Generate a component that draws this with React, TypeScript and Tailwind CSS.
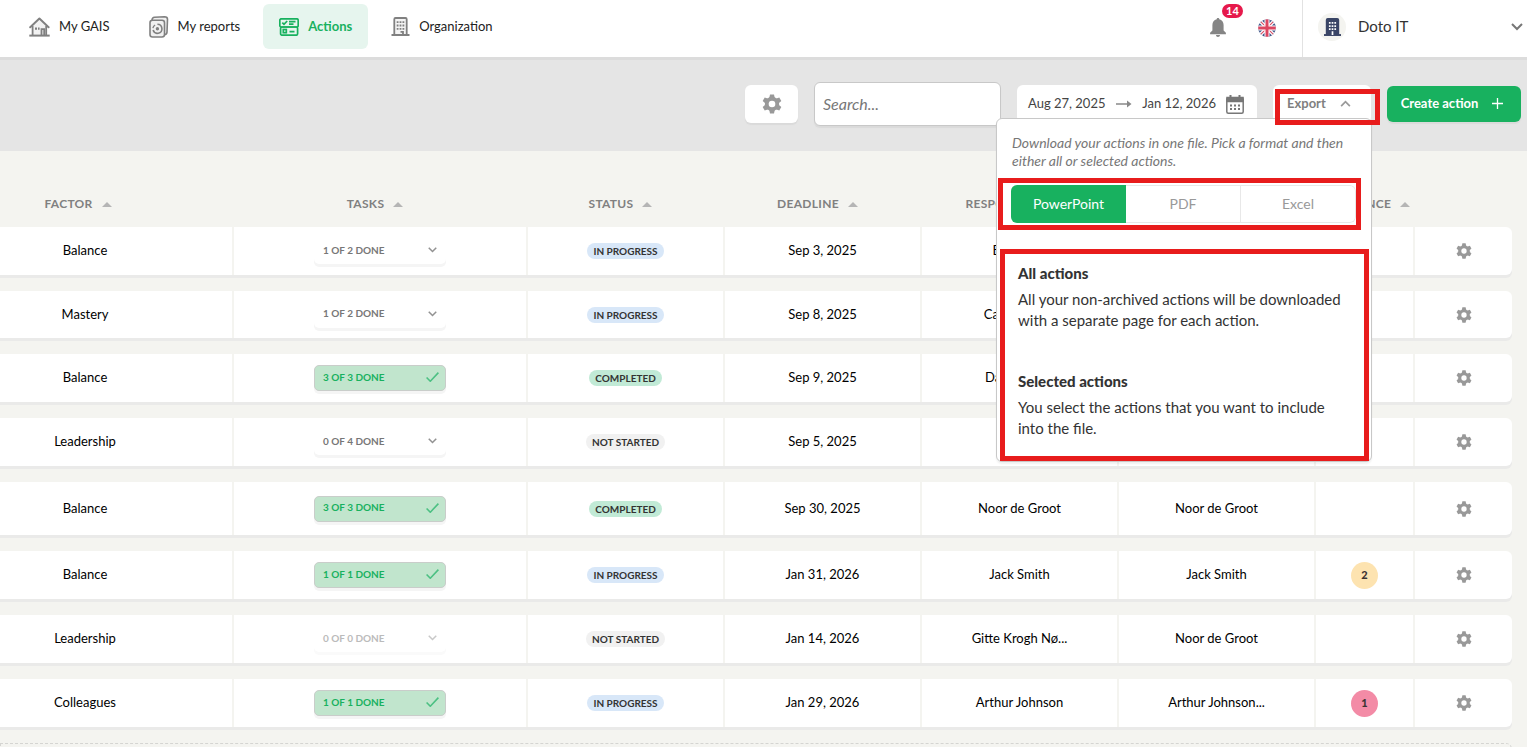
import React from 'react';

interface ActionRow {
  factor: string;
  tasks: string;
  taskState: 'open' | 'done' | 'empty';
  status: 'IN PROGRESS' | 'COMPLETED' | 'NOT STARTED';
  deadline: string;
  responsible: string;
  owner: string;
  relevance?: number;
  height: string;
}

const ROWS: ActionRow[] = [
  { factor: 'Balance', tasks: '1 OF 2 DONE', taskState: 'open', status: 'IN PROGRESS', deadline: 'Sep 3, 2025', responsible: 'Ella Holm', owner: '', height: 'h-12' },
  { factor: 'Mastery', tasks: '1 OF 2 DONE', taskState: 'open', status: 'IN PROGRESS', deadline: 'Sep 8, 2025', responsible: 'Carla Jensen', owner: '', height: 'h-[47px]' },
  { factor: 'Balance', tasks: '3 OF 3 DONE', taskState: 'done', status: 'COMPLETED', deadline: 'Sep 9, 2025', responsible: 'David Smith', owner: '', height: 'h-12' },
  { factor: 'Leadership', tasks: '0 OF 4 DONE', taskState: 'open', status: 'NOT STARTED', deadline: 'Sep 5, 2025', responsible: '', owner: '', height: 'h-12' },
  { factor: 'Balance', tasks: '3 OF 3 DONE', taskState: 'done', status: 'COMPLETED', deadline: 'Sep 30, 2025', responsible: 'Noor de Groot', owner: 'Noor de Groot', height: 'h-[53px]' },
  { factor: 'Balance', tasks: '1 OF 1 DONE', taskState: 'done', status: 'IN PROGRESS', deadline: 'Jan 31, 2026', responsible: 'Jack Smith', owner: 'Jack Smith', relevance: 2, height: 'h-12' },
  { factor: 'Leadership', tasks: '0 OF 0 DONE', taskState: 'empty', status: 'NOT STARTED', deadline: 'Jan 14, 2026', responsible: 'Gitte Krogh Nø...', owner: 'Noor de Groot', height: 'h-12' },
  { factor: 'Colleagues', tasks: '1 OF 1 DONE', taskState: 'done', status: 'IN PROGRESS', deadline: 'Jan 29, 2026', responsible: 'Arthur Johnson', owner: 'Arthur Johnson...', relevance: 1, height: 'h-12' },
];

const STATUS_STYLES = {
  'IN PROGRESS': 'bg-[#d8e7f8]',
  COMPLETED: 'bg-[#c1ead6]',
  'NOT STARTED': 'bg-[#f1f1f1]',
};

const TASK_STYLES = {
  open: 'border-transparent bg-white text-[#777] shadow-[0_3px_0_#f5f5f5]',
  done: 'border-[#c9cdca] bg-[#c1e5cd] text-[#18b15f] shadow-[0_3px_0_#f5f5f5]',
  empty: 'border-transparent bg-white text-[#bbb] shadow-[0_3px_0_#fafafa]',
};

const GearIcon: React.FC<{ className: string }> = ({ className }) => (
  <svg viewBox="-12 -12 24 24" className={className} fill="currentColor" aria-hidden="true">
    {[0, 60, 120].map(a => (
      <path key={a} transform={`rotate(${a})`} d="M-2.4-11.5h4.8l1 4.5v14l-1 4.5h-4.8l-1-4.5v-14z" />
    ))}
    <circle r="8.6" />
    <circle r="4" fill="#fff" />
  </svg>
);

const Chevron: React.FC<{ className: string; up?: boolean }> = ({ className, up }) => (
  <svg viewBox="0 0 12 8" className={className} fill="none" stroke="currentColor" strokeWidth="2" aria-hidden="true">
    <path d={up ? 'M1 7l5-5 5 5' : 'M1 1l5 5 5-5'} />
  </svg>
);

const HomeIcon = () => (
  <svg viewBox="0 0 21 20" className="h-5 w-[21px] text-[#808080]" fill="none" stroke="currentColor" strokeWidth="1.8" aria-hidden="true">
    <path d="M3.600 9.500L10.400 3l6.800 6.500v9H3.600z" fill="#f2f2f2" stroke="none" />
    <path d="M3.600 9v9.300M17.200 9v9.300" />
    <path d="M.3 18.600h20.400" strokeWidth="2" />
    <path d="M1.200 10.200l9.200-8.600 9.200 8.600" strokeLinejoin="round" strokeLinecap="round" strokeWidth="2" />
    <path d="M12.500 18.500v-6.300h2.700v6.300" />
    <path d="M6 11.600h2M9 11.600h1.600" strokeWidth="2.200" />
  </svg>
);

const ReportsIcon = () => (
  <svg viewBox="0 0 20 22" className="h-[22px] w-5 text-[#808080]" fill="none" stroke="currentColor" strokeWidth="1.600" aria-hidden="true">
    <path d="M3 4C3.200 2 4 1.300 5.500 1.200l10-.4c2 0 3 .8 3 2.500L18 16c0 1.600-.8 2.400-2 2.600" fill="#f0f0f0" />
    <rect x="1" y="4.200" width="14.500" height="16.800" rx="2.500" fill="#f0f0f0" />
    <path d="M8.400 8.300a4.500 4.500 0 1 1-4.300 5.800" />
    <path d="M3.900 12.200a4.500 4.500 0 0 1 2.200-3.200" strokeWidth="1.300" />
    <circle cx="8.400" cy="12.800" r=".9" fill="currentColor" />
  </svg>
);

const ActionsIcon = () => (
  <svg viewBox="0 0 20 18" className="h-[18px] w-5 text-[#18b15f]" fill="none" stroke="currentColor" strokeWidth="1.700" aria-hidden="true">
    <rect x=".8" y=".8" width="18.400" height="8.200" rx="1.500" />
    <rect x="1.600" y="9" width="17" height="8.200" rx="1.500" />
    <path d="M3.300 4.700l1.700 1.700 3.200-3.400M10 3.600h6.500M10 6.200h4.500M10.500 13.600h5" />
    <rect x="4.300" y="11.500" width="3" height="3.200" />
  </svg>
);

const BuildingIcon: React.FC<{ className: string; solid?: boolean }> = ({ className, solid }) => (
  <svg viewBox="0 0 18 19" className={className} fill="none" stroke="currentColor" strokeWidth="1.800" aria-hidden="true">
    <path d="M2.800 18V2.200c0-.8.4-1.200 1.200-1.200h10c.8 0 1.200.4 1.200 1.200V18" fill={solid ? 'currentColor' : '#f4f4f4'} />
    <path d="M0 18h18" strokeWidth="2" />
    <g stroke={solid ? '#fff' : 'currentColor'} strokeWidth="1.800">
      <path d="M5.200 5.200H7M8.100 5.200h1.800M11 5.200h1.800M5.200 8.500H7M8.100 8.500h1.800M11 8.500h1.800M5.200 11.800H7M8.100 11.800h1.800M11 11.800h1.800" />
      <path d={solid ? 'M9 14v4' : 'M9 14.800h2.500V18'} />
    </g>
  </svg>
);

const BellIcon = () => (
  <svg viewBox="0 0 16 19" className="h-[19px] w-4 text-[#858585]" fill="currentColor" aria-hidden="true">
    <path d="M8 0c.8 0 1.300.5 1.300 1.300 2.700.7 4.300 2.900 4.300 5.700v5.400l2.300 2.400v1.400H.1v-1.400l2.300-2.400V7c0-2.800 1.600-5 4.300-5.700C6.700.5 7.200 0 8 0zM6 17h4c0 1.200-.8 1.900-2 1.900S6 18.200 6 17z" />
  </svg>
);

const FlagIcon = () => (
  <svg viewBox="0 0 18 18" className="size-[18px]" aria-hidden="true">
    <clipPath id="flag-round"><circle cx="9" cy="9" r="8.800" /></clipPath>
    <g clipPath="url(#flag-round)">
      <path fill="#3d5588" d="M0 0h18v18H0z" />
      <path d="M0 0l18 18M18 0L0 18" stroke="#fff" strokeWidth="3.400" />
      <path d="M0 0l18 18M18 0L0 18" stroke="#d94b63" strokeWidth="1.100" />
      <path d="M9 0v18M0 9h18" stroke="#fff" strokeWidth="5" />
      <path d="M9 0v18M0 9h18" stroke="#dc4560" strokeWidth="3" />
    </g>
  </svg>
);

const CalendarIcon = () => (
  <svg viewBox="0 0 18 19" className="h-[19px] w-[18px] text-[#777]" fill="none" stroke="currentColor" strokeWidth="1.500" aria-hidden="true">
    <rect x=".8" y="2.800" width="16.400" height="15.400" rx="1.500" />
    <path d="M1 2.500h16v4H1z" fill="currentColor" />
    <path d="M4.500 0v3M13.500 0v3" strokeWidth="2" />
    <path d="M4 10.500h2M8 10.500h2M12 10.500h2M4 14h2M8 14h2M12 14h2" strokeWidth="1.800" />
  </svg>
);

const NavItem: React.FC<{ label: string; icon: React.ReactNode; active?: boolean }> = ({ label, icon, active }) => (
  <a
    href="#"
    className={`flex h-[45px] items-center gap-[9px] rounded-md px-4 text-[13px] ${active ? 'bg-[#e6f5ee] font-bold text-[#18b15f]' : 'text-[#222]'}`}
  >
    {icon}
    <span>{label}</span>
  </a>
);

const Header = () => (
  <header className="relative z-10 flex h-[57px] justify-between bg-white shadow-[0_3px_0_#dcdcdc]">
    <nav className="flex gap-[7px] pt-1 pl-[13px]">
      <NavItem label="My GAIS" icon={<HomeIcon />} />
      <NavItem label="My reports" icon={<ReportsIcon />} />
      <NavItem label="Actions" icon={<ActionsIcon />} active />
      <NavItem label="Organization" icon={<BuildingIcon className="h-[19px] w-[19px] text-[#808080]" />} />
    </nav>
    <div className="flex">
      <div className="flex items-center gap-8 pr-[26px] pb-[2px]">
        <button type="button" aria-label="Notifications" className="relative">
          <BellIcon />
          <span className="absolute -top-[14px] left-3 rounded-full bg-[#e6194b] px-1 text-[11px] leading-[14px] font-bold text-white">14</span>
        </button>
        <button type="button" aria-label="Language">
          <FlagIcon />
        </button>
      </div>
      <button type="button" className="flex w-[225px] items-center border-l border-[#e2e2e2] pb-1 pl-[15px] text-[15px] text-[#333]">
        <span className="flex size-7 items-center justify-center rounded-full bg-[#f4f4f0]">
          <BuildingIcon className="h-[18px] w-[17px] text-[#3a4566]" solid />
        </span>
        <span className="ml-3">Doto IT</span>
        <Chevron className="mr-1 ml-auto h-2 w-3 text-[#777]" />
      </button>
    </div>
  </header>
);

const ExportMenu = () => (
  <div className="absolute top-[33px] -right-px z-20 w-[376px] rounded-md border border-[#c8c8c8] bg-white shadow-[0_2px_2px_rgba(0,0,0,0.06)]">
    <p className="px-[15px] pt-[15px] text-sm leading-[18px] text-[#777] italic">
      Download your actions in one file. Pick a format and then either all or selected actions.
    </p>
    <div className="mt-2 mr-[10px] ml-px border-[5px] border-[#e81c1c] py-[2px] pl-2">
      <div className="grid h-[38px] grid-cols-3 overflow-hidden rounded-md text-sm text-[#999]">
        <button type="button" className="bg-[#18b15f] text-white">PowerPoint</button>
        <button type="button" className="border-y border-r border-[#e8e8e8]">PDF</button>
        <button type="button" className="rounded-r-md border-y border-r border-[#e8e8e8]">Excel</button>
      </div>
    </div>
    <div className="mt-[19px] mr-[2px] ml-[3px] flex flex-col gap-10 border-[5px] border-[#e81c1c] px-[13px] pt-[9px] pb-[17px] text-[15px] leading-[21px] text-[#333]">
      <button type="button" className="text-left">
        <strong className="mb-[5px] block font-black">All actions</strong>
        All your non-archived actions will be downloaded with a separate page for each action.
      </button>
      <button type="button" className="text-left">
        <strong className="mb-[5px] block font-black">Selected actions</strong>
        You select the actions that you want to include into the file.
      </button>
    </div>
  </div>
);

const Toolbar = () => (
  <div className="flex h-[94px] items-center justify-end gap-4 bg-[#e5e5e5] pr-[6px]">
    <button type="button" aria-label="Table settings" className="flex h-[38px] w-[53px] items-center justify-center rounded-md bg-white text-[#999] shadow-[0_2px_1px_#dadada]">
      <GearIcon className="size-5" />
    </button>
    <input
      type="text"
      aria-label="Search"
      placeholder="Search..."
      className="h-11 w-[187px] rounded-md border border-[#c8c8c8] bg-white px-2 pb-[2px] text-base italic shadow-[0_2px_1px_#dadada] placeholder:text-[#777]"
    />
    <button type="button" className="flex h-[38px] w-[240px] items-center rounded-md bg-white pr-[13px] pl-[11px] text-[13px] text-[#444]">
      <span className="pb-px">Aug 27, 2025</span>
      <svg viewBox="0 0 16 8" className="mx-auto h-2 w-4 text-[#888]" fill="none" stroke="currentColor" aria-hidden="true">
        <path d="M0 4h12" strokeWidth="1.500" />
        <path d="M11 .5L15.500 4 11 7.500z" fill="currentColor" stroke="none" />
      </svg>
      <span className="mr-[10px] pb-px">Jan 12, 2026</span>
      <CalendarIcon />
    </button>
    <div className="relative">
      <button type="button" aria-expanded="true" className="flex h-[38px] w-[98px] items-center gap-[14px] rounded-md bg-white pb-px pl-[14px] text-[13px] font-bold text-[#808080]">
        Export
        <Chevron className="h-[7px] w-[11px] text-[#999]" up />
      </button>
      <ExportMenu />
      <span className="pointer-events-none absolute top-1 -right-[9px] z-30 h-9 w-[105px] border-[5px] border-[#e81c1c]" />
    </div>
    <button type="button" className="flex h-9 w-[134px] items-center justify-center gap-[14px] rounded-md bg-[#18b15f] pr-1 pb-px text-[13px] font-bold text-white shadow-[0_2px_1px_#dadada]">
      Create action
      <svg viewBox="0 0 11 11" className="size-[11px]" stroke="currentColor" strokeWidth="1.300" aria-hidden="true">
        <path d="M5.500 0v11M0 5.500h11" />
      </svg>
    </button>
  </div>
);

const HeaderCell: React.FC<{ label: string; className?: string }> = ({ label, className = 'pr-3' }) => (
  <th scope="col" className={`h-11 p-0 align-bottom ${className}`}>
    <button type="button" className="mx-auto flex h-[14px] w-fit items-center gap-[9px] text-xs leading-[14px] font-bold tracking-wide whitespace-nowrap text-[#808080]">
      {label}
      <svg viewBox="0 0 10 5" className="h-[5px] w-[10px] text-[#b5b5b5]" fill="currentColor" aria-hidden="true">
        <path d="M5 0l5 5H0z" />
      </svg>
    </button>
  </th>
);

const CELL = 'border-r-2 border-[#f4f4f0] bg-white p-0 shadow-[0_3px_0_#eaeae9]';

const TableRow: React.FC<{ row: ActionRow }> = ({ row }) => (
  <tr className={row.height}>
    <td className={`${CELL} pr-[62px]`}>{row.factor}</td>
    <td className={CELL}>
      <button
        type="button"
        className={`mx-auto flex h-[26px] w-[132px] items-center justify-between rounded-[5px] border pr-[6px] pb-[2px] pl-2 text-[10px] font-bold ${TASK_STYLES[row.taskState]}`}
      >
        {row.tasks}
        {row.taskState === 'done' ? (
          <svg viewBox="0 0 13 10" className="h-[10px] w-[13px]" fill="none" stroke="#4cc083" strokeWidth="1.600" aria-hidden="true">
            <path d="M.6 5.500l3.700 3.700L12.400.6" />
          </svg>
        ) : (
          <Chevron className="mr-[2px] h-[6px] w-[9px] opacity-80" />
        )}
      </button>
    </td>
    <td className={CELL}>
      <span className={`mx-auto block h-4 w-fit rounded-full px-[6px] text-[10px] leading-4 font-bold text-[#333] ${STATUS_STYLES[row.status]}`}>
        {row.status}
      </span>
    </td>
    <td className={CELL}>{row.deadline}</td>
    <td className={CELL}>{row.responsible}</td>
    <td className={CELL}>{row.owner}</td>
    <td className={CELL}>
      {row.relevance && (
        <span className={`mx-auto flex size-[27px] items-center justify-center rounded-full text-[11px] font-black text-[#3c3333] ${row.relevance === 2 ? 'bg-[#fde3b0]' : 'bg-[#f38ba6]'}`}>
          {row.relevance}
        </span>
      )}
    </td>
    <td className="rounded-r-md bg-white p-0 shadow-[0_3px_0_#eaeae9]">
      <button type="button" aria-label="Action settings" className="mx-auto block text-[#999]">
        <GearIcon className="size-4" />
      </button>
    </td>
  </tr>
);

export default function App() {
  return (
    <div className="h-screen overflow-hidden bg-[#f4f4f0] font-['Lato',sans-serif]">
      <Header />
      <Toolbar />
      <main className="pr-[15px]">
        <table className="w-full table-fixed border-separate border-spacing-x-0 border-spacing-y-4 text-center text-[13px] text-black">
          <colgroup>
            <col className="w-[234px]" />
            <col className="w-[294px]" />
            <col className="w-[197px]" />
            <col className="w-[197px]" />
            <col className="w-[197px]" />
            <col className="w-[197px]" />
            <col className="w-[99px]" />
            <col />
          </colgroup>
          <thead>
            <tr>
              <HeaderCell label="FACTOR" className="pr-[78px]" />
              <HeaderCell label="TASKS" />
              <HeaderCell label="STATUS" />
              <HeaderCell label="DEADLINE" />
              <HeaderCell label="RESPONSIBLE" className="pr-[9px]" />
              <th aria-label="Owner" />
              <HeaderCell label="RELEVANCE" className="p-0" />
              <th aria-label="Settings" />
            </tr>
          </thead>
          <tbody>
            {ROWS.map((row, i) => (
              <TableRow key={i} row={row} />
            ))}
          </tbody>
        </table>
        <div className="h-12 rounded-tr-md border border-dashed border-[#d5d5d2]" />
      </main>
    </div>
  );
}
